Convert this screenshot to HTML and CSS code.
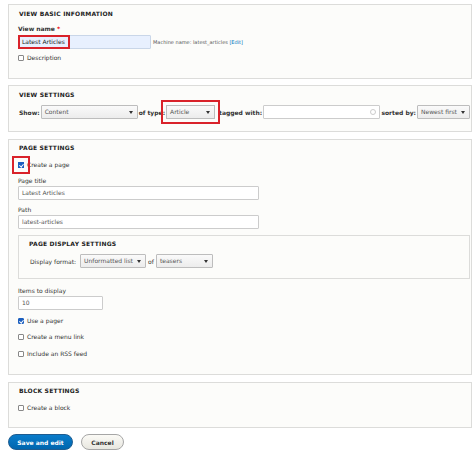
FILE: index.html
```html
<!DOCTYPE html>
<html lang="en">
<head>
  <meta charset="UTF-8">
  <meta name="viewport" content="width=device-width, initial-scale=1.0">
  <title>Add view - Views</title>
  <link rel="stylesheet" href="styles.css">
</head>
<body>

  <form class="view-form">

    <!-- basic information -->
    <section class="panel panel-basic">
      <h3 class="panel-title">View basic information</h3>
      <div class="field-label strong">View name <span class="req">*</span></div>
      <div class="name-row">
        <div class="text-input name-input"><span class="marked">Latest Articles</span></div>
        <span class="machine">Machine name: latest_articles <a href="#">[Edit]</a></span>
      </div>
      <label class="check-row"><span class="box"></span>Description</label>
    </section>

    <!-- view settings -->
    <section class="panel panel-view">
      <h3 class="panel-title">View settings</h3>
      <div class="show-row">
        <span class="inline-label">Show:</span>
        <div class="select sel-show">Content</div>
        <span class="inline-label">of type:</span>
        <div class="select sel-type marked-box">Article</div>
        <span class="inline-label">tagged with:</span>
        <div class="text-input tag-input"><span class="clear-dot"></span></div>
        <span class="inline-label">sorted by:</span>
        <div class="select sel-sort">Newest first</div>
      </div>
    </section>

    <!-- page settings -->
    <section class="panel panel-page">
      <h3 class="panel-title">Page settings</h3>
      <label class="check-row first-check"><span class="box checked marked-check"></span>Create a page</label>
      <div class="field-label gap-a">Page title</div>
      <div class="text-input wide-input">Latest Articles</div>
      <div class="field-label gap-b">Path</div>
      <div class="text-input wide-input">latest-articles</div>

      <div class="panel inner-panel">
        <h3 class="panel-title">Page display settings</h3>
        <div class="format-row">
          <span class="plain-label">Display format:</span>
          <div class="select sel-format">Unformatted list</div>
          <span class="plain-label">of</span>
          <div class="select sel-teaser">teasers</div>
        </div>
      </div>

      <div class="field-label gap-c">Items to display</div>
      <div class="text-input items-input">10</div>

      <label class="check-row gap-d"><span class="box checked"></span>Use a pager</label>
      <label class="check-row gap-d"><span class="box"></span>Create a menu link</label>
      <label class="check-row gap-e"><span class="box"></span>Include an RSS feed</label>
    </section>

    <!-- block settings -->
    <section class="panel panel-block">
      <h3 class="panel-title">Block settings</h3>
      <label class="check-row first-check"><span class="box"></span>Create a block</label>
    </section>

    <div class="actions">
      <button type="button" class="btn btn-primary">Save and edit</button>
      <button type="button" class="btn btn-cancel">Cancel</button>
    </div>

  </form>

</body>
</html>
```

FILE: styles.css
```css
* {
  margin: 0;
  padding: 0;
  box-sizing: border-box;
}

body {
  font-family: "DejaVu Sans", Verdana, sans-serif;
  font-size: 6px;
  color: #333;
  background: #fff;
}

.view-form {
  padding: 4px 2px 0 8px;
}

.panel {
  background: #fcfcfa;
  border: 1px solid #dcdcda;
  padding: 3px 0 14px 9px;
}

.panel-title {
  font-size: 6px;
  font-weight: bold;
  text-transform: uppercase;
  letter-spacing: 0.2px;
  line-height: 10px;
  color: #222;
  margin-left: 1px;
}

.panel-basic {
  height: 75px;
  padding-top: 4px;
}

.panel-view {
  margin-top: 6px;
  height: 47px;
  padding-top: 4px;
  padding-right: 1px;
}

.panel-page {
  margin-top: 7px;
  height: 236px;
}

.panel-block {
  margin-top: 7px;
  height: 46px;
}

.field-label {
  line-height: 10px;
  color: #333;
}

.strong {
  font-weight: bold;
  margin-top: 5px;
}

.req {
  color: #e00;
}

.name-row {
  display: flex;
  align-items: center;
  gap: 2px;
  margin-top: 1px;
}

.text-input {
  height: 14px;
  border: 1px solid #ccc;
  border-radius: 1px;
  background: #fff;
  line-height: 12px;
  padding-left: 3px;
  color: #555;
  flex-shrink: 0;
}

.name-input {
  width: 133px;
  background: #e8f0fe;
  border-color: #c9d6e8;
  padding-left: 0;
}

.marked {
  display: inline-block;
  color: #222;
  padding: 0 4px 0 3px;
  outline: 2px solid #d9222a;
  outline-offset: -1px;
  line-height: 12px;
}

.machine {
  font-size: 5px;
  color: #555;
  white-space: nowrap;
}

.machine a {
  color: #0074bd;
  text-decoration: none;
}

.check-row {
  display: flex;
  align-items: center;
  gap: 3px;
  line-height: 10px;
  margin-top: 4px;
}

.box {
  width: 6px;
  height: 6px;
  border: 1px solid #888;
  border-radius: 1px;
  background: #fff;
  position: relative;
}

.box.checked {
  background: #1c5fbf;
  border-color: #1c5fbf;
}

.box.checked::after {
  content: "";
  position: absolute;
  left: 1px;
  top: 0;
  width: 1.5px;
  height: 3px;
  border: solid #fff;
  border-width: 0 1px 1px 0;
  transform: rotate(40deg);
}

.marked-check {
  border-radius: 0;
  outline: 2px solid #d9222a;
  outline-offset: 4px;
}

.show-row,
.format-row {
  display: flex;
  align-items: center;
  height: 14px;
  margin-top: 5px;
  white-space: nowrap;
}

.inline-label {
  font-weight: bold;
  margin: 0 1px 0 1px;
  flex-shrink: 0;
}

.select {
  height: 14px;
  border: 1px solid #bdbdbd;
  border-radius: 1px;
  background: linear-gradient(#fafafa, #ececec);
  line-height: 12px;
  padding-left: 3px;
  color: #555;
  position: relative;
  flex-shrink: 0;
}

.select::after {
  content: "";
  position: absolute;
  right: 4px;
  top: 5px;
  border-left: 2px solid transparent;
  border-right: 2px solid transparent;
  border-top: 3px solid #333;
}

.sel-show { width: 97px; }
.sel-type { width: 49px; margin-right: 3px; }
.sel-sort { width: 53px; }
.sel-format { width: 66px; margin-left: 2px; }
.sel-teaser { width: 57px; }

.marked-box {
  border-radius: 0;
  outline: 2px solid #d9222a;
  outline-offset: 3px;
}

.tag-input {
  flex: 1 1 auto;
  min-width: 0;
  position: relative;
}

.clear-dot {
  position: absolute;
  right: 3px;
  top: 3px;
  width: 6px;
  height: 6px;
  border: 1px solid #ccc;
  border-radius: 50%;
}

.first-check {
  margin-top: 7px;
}

.gap-a { margin-top: 6px; }
.gap-b { margin-top: 5px; }
.gap-c { margin-top: 7px; }
.gap-d { margin-top: 6px; }
.gap-e { margin-top: 7px; }

.wide-input {
  width: 241px;
}

.items-input {
  width: 85px;
}

.inner-panel {
  margin-top: 6px;
  height: 44px;
  padding: 3px 0 0 9px;
  margin-right: 1px;
}

.plain-label {
  margin: 0 2px 0 2px;
}

.actions {
  display: flex;
  gap: 8px;
  margin-top: 6px;
}

.btn {
  font-family: "DejaVu Sans", Verdana, sans-serif;
  font-size: 6px;
  font-weight: bold;
  height: 16px;
  border-radius: 10px;
  cursor: pointer;
}

.btn-primary {
  width: 65px;
  background: linear-gradient(#0a7ccb, #0066ae);
  border: 1px solid #1e5c90;
  color: #fff;
}

.btn-cancel {
  width: 43px;
  background: linear-gradient(#fbfaf6, #e8e7e0);
  border: 1px solid #a6a6a6;
  color: #333;
}
```
